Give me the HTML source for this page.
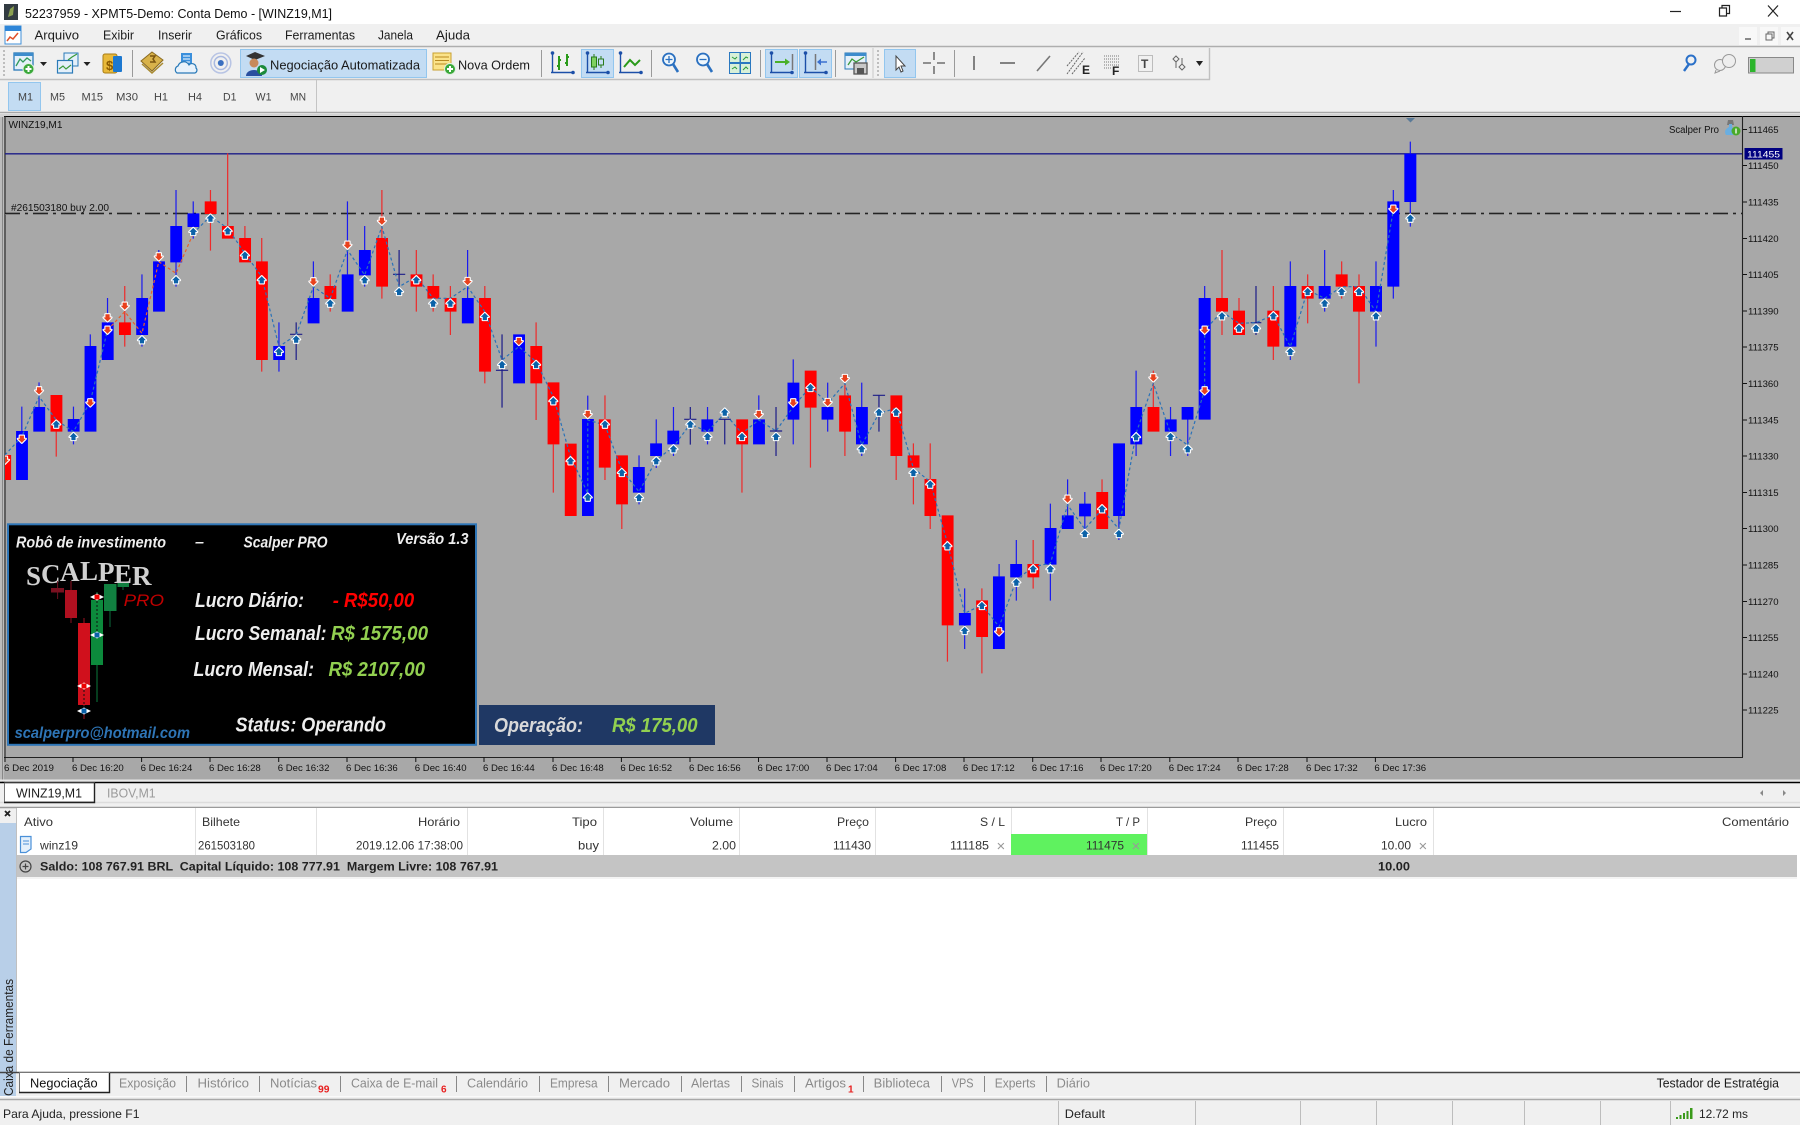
<!DOCTYPE html>
<html><head><meta charset="utf-8"><title>XPMT5</title>
<style>
html,body{margin:0;padding:0;background:#f0f0f0;overflow:hidden}
svg{display:block}
text{font-family:"Liberation Sans",sans-serif;white-space:pre}
.m{font-size:12.5px;fill:#1c1c1c}
.tf{font-size:11px;fill:#444}
.tb{font-size:12.5px;fill:#1a1a1a}
.h{font-size:12px;fill:#333}
.r{font-size:12px;fill:#333}
.b{font-size:12px;fill:#222;font-weight:bold}
.t{font-size:12.5px;fill:#8a8a8a}
.p{font-size:10px;fill:#111}
.d{font-size:9.6px;fill:#111}
.i{font-weight:bold;font-style:italic;fill:#eee}
.s{font-size:12px;fill:#222}
.x{font-size:15px;fill:#999}
.w{vector-effect:non-scaling-stroke;stroke-width:1.2;fill:none}
.sep{stroke:#9a9a9a;stroke-width:1}
.ts{stroke:#888;stroke-width:1}
.cs{stroke:#e2e2e2;stroke-width:1}
.hi{fill:#c3dcf3;stroke:#93c6ee;stroke-width:1}
</style></head><body>
<svg xmlns="http://www.w3.org/2000/svg" width="1800" height="1125" viewBox="0 0 1800 1125">
<defs>
<clipPath id="cc"><rect x="5" y="117" width="1737" height="640"/></clipPath>
<path id="ua" d="M0-3.800L4 .2H2.100V3.400H-2.100V.2H-4Z" fill="#0b62a8" stroke="#fff" stroke-width="2.200" stroke-linejoin="round" paint-order="stroke"/>
<path id="da" d="M0 3.800L4-.2H2.100V-3.400H-2.100V-.2H-4Z" fill="#e8401c" stroke="#fff" stroke-width="2.200" stroke-linejoin="round" paint-order="stroke"/>
<use id="u8" href="#ua" transform="scale(2.613,3)"/>
<use id="d8" href="#da" transform="scale(2.613,3)"/>
<use id="u1" href="#ua" transform="scale(3,3)"/>
<use id="d1" href="#da" transform="scale(3,3)"/>
<g id="pl"><circle r="5.5" fill="#3aa83a" stroke="#dff0df" stroke-width="1"/><path d="M-3 0H3M0-3V3" stroke="#fff" stroke-width="2"/></g>
<g id="ax"><path d="M.5 0V21M-1 20.5H21" stroke="#1c4fa8" stroke-width="1.4" fill="none"/><circle cx=".5" cy="1" r="1.8" fill="#1c4fa8"/><circle cx="21" cy="20.5" r="1.8" fill="#1c4fa8"/></g>
</defs>

<rect width="1800" height="1125" fill="#f0f0f0"/>
<!-- title bar -->
<rect width="1800" height="24" fill="#fff"/>
<rect x="4" y="4" width="14" height="16" fill="#333c42"/><path d="M8 17L10 9 14 6 13 15Z" fill="#8aa050"/>
<text x="25" y="18" font-size="13" fill="#111" textLength="307" lengthAdjust="spacingAndGlyphs">52237959 - XPMT5-Demo: Conta Demo - [WINZ19,M1]</text>
<path d="M1670 11.5H1681" stroke="#222" stroke-width="1.2"/>
<path d="M1719.5 8h7v8h-7zM1722 8V5.500h7.500v8H1726.500" fill="none" stroke="#222" stroke-width="1.2"/>
<path d="M1768 5.500L1778 16.500M1778 5.500L1768 16.500" stroke="#222" stroke-width="1.2"/>

<!-- menu -->
<rect x="5" y="26" width="16" height="18" fill="#fff" stroke="#3f8fd8"/><rect x="5" y="26" width="16" height="5" fill="#2f86d8"/><path d="M7 41L10 37 13 39 18 33" stroke="#e0502a" stroke-width="1.5" fill="none"/>
<text class="m" x="34.500" y="39.500" textLength="44.500" lengthAdjust="spacingAndGlyphs">Arquivo</text>
<text class="m" x="103" y="39.500" textLength="31" lengthAdjust="spacingAndGlyphs">Exibir</text>
<text class="m" x="158" y="39.500" textLength="34" lengthAdjust="spacingAndGlyphs">Inserir</text>
<text class="m" x="216" y="39.500" textLength="46" lengthAdjust="spacingAndGlyphs">Gráficos</text>
<text class="m" x="285" y="39.500" textLength="70" lengthAdjust="spacingAndGlyphs">Ferramentas</text>
<text class="m" x="378" y="39.500" textLength="35" lengthAdjust="spacingAndGlyphs">Janela</text>
<text class="m" x="436" y="39.500" textLength="34" lengthAdjust="spacingAndGlyphs">Ajuda</text>
<rect x="1739" y="27" width="18" height="18" fill="#f8f8f8"/><rect x="1760" y="27" width="18" height="18" fill="#f8f8f8"/><rect x="1781" y="27" width="19" height="18" fill="#f8f8f8"/>
<path d="M1745 39H1751" stroke="#666" stroke-width="1.5"/><path d="M1766 34h6v6h-6zM1768 34v-2h6v6h-2" fill="none" stroke="#666"/><path d="M1787 32L1793 40M1793 32L1787 40" stroke="#444" stroke-width="1.6"/>
<path d="M0 46.500H1800" stroke="#aeaeae" stroke-width="1.4"/>

<!-- toolbar 1 -->
<path d="M1209.500 48V79.500H0" stroke="#c0c0c0" fill="none" stroke-width="1.400"/>
<path d="M4 50V76" stroke="#bdbdbd" stroke-width="2" stroke-dasharray="2 2"/>
<!-- new chart -->
<rect x="14" y="53" width="19" height="17" fill="#e4f0fa" stroke="#2a7ab8" stroke-width="1.300"/><rect x="14" y="53" width="19" height="3" fill="#3d8ccc"/><path d="M16 66L20 59 23 62 27 58 31 61" stroke="#2f9a5a" stroke-width="1.300" fill="none"/><use href="#pl" x="28.500" y="69"/>
<path d="M40 62h7l-3.500 4z" fill="#222"/>
<rect x="64" y="53" width="14" height="13" fill="#e4f0fa" stroke="#2a7ab8"/><rect x="57.500" y="60.500" width="15" height="12.500" fill="#e4f0fa" stroke="#2a7ab8" stroke-width="1.200"/><path d="M59 69L63 66 66 69 71 65M68 60L72 57 77 54" stroke="#3a9a3a" stroke-width="1.200" fill="none"/>
<path d="M83.500 62h7l-3.500 4z" fill="#222"/>
<rect x="103" y="54" width="14" height="19" rx="2" fill="#e8b93a" stroke="#a97d15"/><rect x="113" y="56" width="9" height="16" rx="1" fill="#1c78d0"/><text x="106" y="70" font-size="13" font-weight="bold" fill="#8a5a00">$</text>
<path d="M132.500 50V77" class="sep"/>
<path d="M141 61L152 52 163 60 152 71Z" fill="#d8b24a" stroke="#8a6a20"/><path d="M142 64L152 73 163 63" fill="none" stroke="#a88a30" stroke-width="1.500"/><path d="M150 56h5l-2 3 2 3h-5" stroke="#7a5510" fill="none" stroke-width="1.500"/>
<rect x="181" y="53" width="11" height="13" fill="#3a8fdc"/><path d="M183 56h7M183 59h7M183 62h7" stroke="#fff"/><path d="M177 73a4 4 0 0 1 1-7 6 6 0 0 1 11-1 4 4 0 0 1 7 3 3 3 0 0 1-1 5Z" fill="#e8f2fb" stroke="#2a7ab8" stroke-width="1.200"/>
<circle cx="220.800" cy="63" r="3" fill="#3a6fc0"/><circle cx="220.800" cy="63" r="6.500" fill="none" stroke="#a8b8e0" stroke-width="1.500"/><circle cx="220.800" cy="63" r="10" fill="none" stroke="#b8c4e4" stroke-width="1.500"/>
<rect class="hi" x="240.500" y="49.500" width="186" height="28"/>
<path d="M246 56L255 52 265 56 255 60Z" fill="#333"/><circle cx="254" cy="63" r="4.500" fill="#c88a5a"/><path d="M246 76C246 68 262 68 262 76Z" fill="#2a50a0"/><circle cx="262" cy="70" r="5" fill="#1c8a3a"/><path d="M260 67L265 70 260 73Z" fill="#fff"/>
<text class="tb" x="270" y="69.500" textLength="150" lengthAdjust="spacingAndGlyphs">Negociação Automatizada</text>
<rect x="433" y="53" width="18" height="17" fill="#fbe38a" stroke="#c8a030"/><path d="M435 57H449M435 60.500H449M435 64H449" stroke="#b88a20"/><use href="#pl" x="450" y="69"/>
<text class="tb" x="458" y="69.500" textLength="72" lengthAdjust="spacingAndGlyphs">Nova Ordem</text>
<path d="M541.500 50V77" class="sep"/>
<!-- chart-type -->
<use href="#ax" x="552" y="52"/><path d="M559 56V70M557 66H559M559 60H561M567 54V66M565 63H567M567 57H569" stroke="#2a9a1a" stroke-width="2" fill="none"/>
<rect class="hi" x="581.500" y="49.500" width="32" height="28"/>
<use href="#ax" x="587" y="52"/><path d="M594 54V70M601 56V68" stroke="#2a7a1a"/><rect x="591.500" y="57" width="5" height="10" fill="#7fd060" stroke="#2a7a1a"/><rect x="598.500" y="59" width="5" height="6" fill="#c3dcf3" stroke="#2a7a1a"/>
<use href="#ax" x="620" y="52"/><path d="M624 67L630 60 635 65 640 60" stroke="#2a9a1a" stroke-width="2" fill="none"/>
<path d="M651.500 50V77" class="sep"/>
<circle cx="669" cy="59.500" r="6" fill="#eef6fc" stroke="#2a70c0" stroke-width="1.800"/><path d="M673 64L678 72" stroke="#2a70c0" stroke-width="2.600"/><path d="M665.500 59.500H672.500M669 56V63" stroke="#2a70c0" stroke-width="1.300"/>
<circle cx="703" cy="59.500" r="6" fill="#eef6fc" stroke="#2a70c0" stroke-width="1.800"/><path d="M707 64L712 72" stroke="#2a70c0" stroke-width="2.600"/><path d="M699.500 59.500H706.500" stroke="#2a70c0" stroke-width="1.300"/>
<rect x="729" y="52" width="22" height="22" fill="#2a78c0"/><rect x="730" y="53" width="9.500" height="9" fill="#d8f0d8"/><rect x="741" y="53" width="9" height="9" fill="#d8f0d8"/><rect x="730" y="64" width="9.500" height="9" fill="#d8f0d8"/><rect x="741" y="64" width="9" height="9" fill="#d8f0d8"/><path d="M732 57l3 2 2-2M743 60l3-3 2 1M732 69l3-2 2 2M743 70l3-3 2 2" stroke="#2a9a3a" fill="none"/>
<path d="M760.500 50V77" class="sep"/>
<rect class="hi" x="765.500" y="49.500" width="32" height="28"/><rect class="hi" x="799.500" y="49.500" width="32" height="28"/>
<use href="#ax" x="771" y="52"/><path d="M775 62H786" stroke="#4ab02a" stroke-width="2"/><path d="M785 58.500L790 62 785 65.500Z" fill="#4ab02a"/><path d="M792.500 54V70" stroke="#777" stroke-width="1.500"/>
<use href="#ax" x="805" y="52"/><path d="M815.500 54V70" stroke="#777" stroke-width="1.500"/><path d="M821 62H827" stroke="#3a70d0" stroke-width="1.500"/><path d="M821 58.500L817 62 821 65.500Z" fill="#3a70d0"/>
<path d="M835.500 50V77" class="sep"/>
<rect x="845" y="53" width="21" height="16" fill="#e4f0fa" stroke="#2a7ab8"/><rect x="845" y="53" width="21" height="3" fill="#3d8ccc"/><path d="M848 65L852 59 856 62 864 57" stroke="#3a9a3a" fill="none" stroke-width="1.300"/><rect x="854" y="63" width="13" height="11" fill="#c8c8c8" stroke="#555" stroke-width="1.300"/><rect x="857" y="68" width="7" height="6" fill="#555"/>
<path d="M873 48V78" stroke="#c8c8c8"/><path d="M878 50V76" stroke="#bdbdbd" stroke-width="2" stroke-dasharray="2 2"/>
<rect class="hi" x="884.500" y="49.500" width="31" height="28"/><path d="M896 56V70L899 67 901 72 903 71 901 66H905Z" fill="#fff" stroke="#444"/>
<path d="M934 52V60M934 66V74M923 63H931M937 63H945" stroke="#555" stroke-width="1.300"/>
<path d="M954.500 50V77" class="sep"/>
<path d="M974 56V70" stroke="#666" stroke-width="1.600"/>
<path d="M1000 63H1015" stroke="#666" stroke-width="1.600"/>
<path d="M1037 71L1050 56" stroke="#777" stroke-width="1.600"/>
<path d="M1067 74L1083 52M1067 66L1079 52M1072 74L1085 58" stroke="#666" stroke-width="1" stroke-dasharray="2 1"/><text x="1082" y="74" font-size="12" font-weight="bold" fill="#222">E</text>
<path d="M1104 56H1120M1104 59H1120M1104 62H1120M1104 65H1120M1104 68H1111" stroke="#777" stroke-dasharray="1 1"/><text x="1112" y="75" font-size="12" font-weight="bold" fill="#222">F</text>
<rect x="1138.500" y="55.500" width="14" height="16" fill="none" stroke="#888" stroke-dasharray="1 1"/><text x="1141" y="68" font-size="12" font-weight="bold" fill="#444">T</text>
<path d="M1176 56L1179 59 1176 62 1173 59ZM1182 64L1185 67 1182 70 1179 67ZM1176 62V68M1182 58V64" stroke="#666" fill="none"/>
<path d="M1196 61h7l-3.500 5z" fill="#222"/>
<!-- right icons -->
<circle cx="1691" cy="60" r="4.500" fill="none" stroke="#2a70c8" stroke-width="2"/><path d="M1689 64L1684 71" stroke="#2a70c8" stroke-width="2.400"/>
<circle cx="1720" cy="65" r="5.500" fill="#eee" stroke="#999"/><circle cx="1729" cy="61" r="6.500" fill="#eee" stroke="#999"/><path d="M1716 70L1715 73 1720 71" fill="#eee" stroke="#999"/>
<rect x="1748.500" y="57.500" width="45" height="15.500" fill="#d0d0d0" stroke="#888"/><rect x="1750" y="59" width="5.500" height="13" fill="#2cb52c"/>

<!-- timeframe row -->
<rect class="hi" x="8.500" y="82.500" width="32" height="28"/>
<text class="tf" x="18" y="100.500" textLength="15" lengthAdjust="spacingAndGlyphs">M1</text>
<text class="tf" x="50" y="100.500" textLength="15" lengthAdjust="spacingAndGlyphs">M5</text>
<text class="tf" x="81.500" y="100.500" textLength="21.500" lengthAdjust="spacingAndGlyphs">M15</text>
<text class="tf" x="116" y="100.500" textLength="22" lengthAdjust="spacingAndGlyphs">M30</text>
<text class="tf" x="154" y="100.500" textLength="14" lengthAdjust="spacingAndGlyphs">H1</text>
<text class="tf" x="188" y="100.500" textLength="14" lengthAdjust="spacingAndGlyphs">H4</text>
<text class="tf" x="223" y="100.500" textLength="13.500" lengthAdjust="spacingAndGlyphs">D1</text>
<text class="tf" x="255.500" y="100.500" textLength="16" lengthAdjust="spacingAndGlyphs">W1</text>
<text class="tf" x="290" y="100.500" textLength="16" lengthAdjust="spacingAndGlyphs">MN</text>
<path d="M316.500 80V112" stroke="#c4c4c4"/>
<path d="M0 112.500H1800" stroke="#a6a6a6" stroke-width="1.600"/>
<rect x="0" y="114" width="1800" height="3" fill="#d2d2d2"/>
<rect x="0" y="117" width="5" height="665" fill="#bcbcbc"/><path d="M2.500 117V782" stroke="#888"/>

<!-- chart -->
<rect x="4" y="116" width="1796" height="664" fill="#a8a8a8"/>
<path d="M4 116.500H1800" stroke="#000" stroke-width="1.100"/>
<path d="M5 116V757" stroke="#222" stroke-width="1.100"/>
<path d="M1742.500 116V757" stroke="#222" stroke-width="1.100"/>
<path d="M4 757.500H1743" stroke="#222" stroke-width="1.100"/>
<path d="M0 780.500H1800" stroke="#e6e6e6" stroke-width="2"/>
<path d="M0 782.500H1800" stroke="#000" stroke-width="1.500"/>

<text class="p" x="8.500" y="128" textLength="54" lengthAdjust="spacingAndGlyphs">WINZ19,M1</text>
<text class="p" x="11" y="211" textLength="98" lengthAdjust="spacingAndGlyphs">#261503180 buy 2.00</text>
<text class="p" x="1669" y="133" textLength="50" lengthAdjust="spacingAndGlyphs">Scalper Pro</text>
<path d="M1728 120h5l1 5h-7z" fill="#777"/><path d="M1729 124h3v3l4 3-3 5h-7q-3-5 3-8z" fill="#6aaee0"/><circle cx="1736" cy="131" r="4.500" fill="#4aaa2a"/><path d="M1736 128.500v5" stroke="#fff" stroke-width="1.300"/>
<path d="M1406 118H1415L1410.500 122.500Z" fill="#5a7a98"/>

<g clip-path="url(#cc)">
<path d="M5 153.800H1742" stroke="#1c1c88" stroke-width="1.300"/>
<path d="M5 214.300H1742" stroke="#777" stroke-width="1" stroke-dasharray="15 5 3 5"/>
<path d="M5 213.300H1742" stroke="#000" stroke-width="1" stroke-dasharray="15 5 3 5"/>

<g transform="translate(0,130) scale(.38265,.33333)">
<path class="w" stroke="#ee2a2a" d="M147 905V980M326 468V650M550 180V362M595 70V288M640 288V324M684 324V725M863 433V545M998 180V506M1088 360V545M1132 433V545M1177 468V615M1267 468V760M1401 577V870M1446 943V1088"/>
<path class="w" stroke="#1a1af0" d="M57 830V903M102 757V831M192 830V943M236 613V648M281 504V577M371 433V650M415 360V394M460 180V470M505 214V326M729 577V725M819 394V504M908 214V433M953 288V470M1222 360V504M1536 797V867"/>
<path class="w" stroke="#1c1c88" d="M774 577V690M758 613H790M1043 360V470M1027 433H1059M1312 613V833M1296 721H1328"/>
<path fill="#f00" d="M-3 975h32V1050h-32zM132 795h31V905h-31zM311 577h31V615h-31zM535 214h31V252h-31zM580 288h31V326h-31zM625 324h31V397h-31zM669 394h31V690h-31zM848 468h31V507h-31zM983 324h31V470h-31zM1073 433h31V470h-31zM1117 468h31V506h-31zM1162 504h31V545h-31zM1252 504h31V725h-31zM1386 648h31V760h-31zM1431 757h31V943h-31zM1476 941h31V1158h-31z"/>
<path fill="#00f" d="M42 903h31V1050h-31zM87 831h31V905h-31zM177 867h31V905h-31zM221 648h31V905h-31zM266 577h31V690h-31zM356 504h31V615h-31zM400 394h31V545h-31zM445 288h31V397h-31zM490 250h31V291h-31zM714 648h31V690h-31zM804 504h31V580h-31zM893 433h31V545h-31zM938 360h31V436h-31zM1207 504h31V580h-31zM1341 613h31V760h-31zM1521 867h31V1158h-31z"/>
<path class="w" stroke="#2a72b8" stroke-dasharray="3 2.500" d="M13 975L57 920 102 800 147 870 192 905 236 815 281 600M505 310L550 258 595 295 640 370 684 440 729 650 774 615 819 470 863 505 908 360 953 435 998 290 1043 470 1088 440 1132 505 1177 505 1222 470 1267 545 1312 690 1356 650 1401 695 1446 800 1491 980 1536 1090 1536 870 1581 885"/>
<path class="w" stroke="#e8602a" stroke-dasharray="3 2.500" d="M281 600L326 545 371 610 415 395 460 430 505 310"/>
<use href="#d8" x="13" y="990"/><use href="#d8" x="57" y="927"/><use href="#d8" x="102" y="782"/><use href="#u8" x="147" y="883"/><use href="#u8" x="192" y="920"/><use href="#d8" x="236" y="818"/><use href="#d8" x="281" y="563"/><use href="#d8" x="281" y="600"/><use href="#d8" x="326" y="528"/><use href="#u8" x="371" y="630"/><use href="#d8" x="415" y="380"/><use href="#u8" x="460" y="450"/><use href="#u8" x="505" y="305"/><use href="#u8" x="550" y="265"/><use href="#u8" x="595" y="303"/><use href="#u8" x="640" y="376"/><use href="#u8" x="684" y="450"/><use href="#u8" x="729" y="665"/><use href="#u8" x="774" y="628"/><use href="#d8" x="819" y="455"/><use href="#u8" x="863" y="520"/><use href="#d8" x="908" y="345"/><use href="#u8" x="953" y="450"/><use href="#d8" x="998" y="273"/><use href="#u8" x="1043" y="485"/><use href="#u8" x="1088" y="450"/><use href="#u8" x="1132" y="520"/><use href="#u8" x="1177" y="520"/><use href="#d8" x="1222" y="454"/><use href="#u8" x="1267" y="560"/><use href="#u8" x="1312" y="704"/><use href="#d8" x="1356" y="634"/><use href="#u8" x="1401" y="704"/><use href="#u8" x="1446" y="813"/><use href="#u8" x="1491" y="993"/><use href="#d8" x="1536" y="853"/><use href="#u8" x="1536" y="1102"/>
</g>

<g transform="translate(600,350) scale(.38265,.33333)">
<path class="w" stroke="#ee2a2a" d="M13 136V390M57 463V537M371 283V428M550 173V353M640 98V318M774 318V390M819 280V463M863 280V537M908 826V935M998 715V970M1132 570V716M1312 388V426M1446 62V171"/>
<path class="w" stroke="#1a1af0" d="M102 316V463M147 208V354M192 171V318M281 171V283M415 136V208M505 28V283M595 98V245M684 98V318M953 715V897M1043 642V679M1088 570V752M1177 461V752M1222 388V496M1267 426V537M1356 498V570M1401 62V318M1491 171V318M1536 171V318"/>
<path class="w" stroke="#1c1c88" d="M236 171V284M220 208H252M326 208V283M310 208H342M460 171V318M444 243H476M729 136V245M713 136H745"/>
<path fill="#f00" d="M-3 208h31V353h-31zM42 316h31V463h-31zM356 208h31V283h-31zM535 62h31V173h-31zM625 136h31V245h-31zM759 136h31V318h-31zM804 316h31V353h-31zM848 387h31V498h-31zM893 496h31V826h-31zM983 751h31V861h-31zM1117 642h31V682h-31zM1297 426h31V537h-31zM1431 171h31V245h-31z"/>
<path fill="#00f" d="M86 351h31V428h-31zM131 280h31V318h-31zM176 242h31V283h-31zM265 208h31V245h-31zM400 208h31V283h-31zM490 98h31V209h-31zM579 171h31V209h-31zM669 171h31V283h-31zM938 789h31V826h-31zM1027 679h31V897h-31zM1072 642h31V682h-31zM1162 534h31V644h-31zM1207 496h31V537h-31zM1252 461h31V499h-31zM1341 280h31V498h-31zM1386 171h31V283h-31zM1476 208h31V245h-31zM1520 171h31V209h-31z"/>
<path class="w" stroke="#2a72b8" stroke-dasharray="3 2.500" d="M13 225L57 360 102 425 147 330 192 290 236 222 281 245 326 190 371 250 415 210 460 243 505 170 550 110 595 160 640 100 684 285 729 190 774 175 819 355 863 395 908 580 953 790 998 765 1043 830 1088 690 1132 650 1177 640 1222 465 1267 537 1312 478 1356 537 1401 250 1446 100 1491 250 1536 285"/>
<use href="#u8" x="13" y="223"/><use href="#u8" x="57" y="368"/><use href="#u8" x="102" y="443"/><use href="#u8" x="147" y="333"/><use href="#u8" x="192" y="297"/><use href="#u8" x="236" y="223"/><use href="#u8" x="281" y="260"/><use href="#u8" x="326" y="187"/><use href="#u8" x="371" y="260"/><use href="#d8" x="415" y="193"/><use href="#u8" x="460" y="260"/><use href="#d8" x="505" y="158"/><use href="#u8" x="550" y="113"/><use href="#d8" x="595" y="157"/><use href="#d8" x="640" y="85"/><use href="#u8" x="684" y="297"/><use href="#u8" x="729" y="187"/><use href="#u8" x="774" y="187"/><use href="#u8" x="819" y="368"/><use href="#u8" x="863" y="403"/><use href="#u8" x="908" y="588"/><use href="#u8" x="953" y="842"/><use href="#u8" x="998" y="767"/><use href="#d8" x="1043" y="845"/><use href="#u8" x="1088" y="697"/><use href="#u8" x="1132" y="657"/><use href="#u8" x="1177" y="657"/><use href="#d8" x="1222" y="447"/><use href="#u8" x="1267" y="551"/><use href="#u8" x="1312" y="477"/><use href="#u8" x="1356" y="551"/><use href="#u8" x="1401" y="261"/><use href="#d8" x="1446" y="83"/><use href="#u8" x="1491" y="260"/><use href="#u8" x="1536" y="297"/>
</g>

<g transform="translate(1100,130) scale(.33333)">
<path class="w" stroke="#ee2a2a" d="M366 360V615M417 504V542M520 468V690M623 433V580M725 394V506M777 433V760"/>
<path class="w" stroke="#1a1af0" d="M314 468V504M571 394V690M674 360V545M828 394V650M880 180V506M931 35V290"/>
<path class="w" stroke="#1c1c88" d="M468 468V615M452 578H484"/>
<path fill="#f00" d="M348 504h36V545h-36zM399 542h36V615h-36zM502 542h36V650h-36zM605 468h36V506h-36zM707 433h36V470h-36zM759 468h36V545h-36z"/>
<path fill="#00f" d="M296 504h36V869h-36zM553 468h36V650h-36zM656 468h36V506h-36zM810 468h36V545h-36zM862 214h36V470h-36zM913 71h36V216h-36z"/>
<path class="w" stroke="#2a72b8" stroke-dasharray="3 2.500" d="M263 945L314 780 314 600 366 545 417 580 468 578 520 555 571 650 623 480 674 505 725 470 777 470 828 545 880 240"/>
<use href="#d1" x="314" y="600"/><use href="#d1" x="314" y="782"/><use href="#u1" x="366" y="558"/><use href="#u1" x="417" y="595"/><use href="#u1" x="468" y="595"/><use href="#u1" x="520" y="558"/><use href="#u1" x="571" y="665"/><use href="#u1" x="623" y="485"/><use href="#u1" x="674" y="520"/><use href="#u1" x="725" y="485"/><use href="#u1" x="777" y="485"/><use href="#u1" x="828" y="558"/><use href="#d1" x="880" y="237"/><use href="#u1" x="931" y="265"/>
</g>
</g>

<!-- price axis -->
<path stroke="#111" d="M1743 129.500h4M1743 165.500h4M1743 202h4M1743 238.500h4M1743 274.500h4M1743 311h4M1743 347h4M1743 383.500h4M1743 420h4M1743 456h4M1743 492.500h4M1743 528.500h4M1743 565h4M1743 601.500h4M1743 637.500h4M1743 674h4M1743 710h4"/>
<text class="d" x="1748" y="133">111465</text>
<text class="d" x="1748" y="169">111450</text>
<text class="d" x="1748" y="205.500">111435</text>
<text class="d" x="1748" y="242">111420</text>
<text class="d" x="1748" y="278">111405</text>
<text class="d" x="1748" y="314.500">111390</text>
<text class="d" x="1748" y="350.500">111375</text>
<text class="d" x="1748" y="387">111360</text>
<text class="d" x="1748" y="423.500">111345</text>
<text class="d" x="1748" y="459.500">111330</text>
<text class="d" x="1748" y="496">111315</text>
<text class="d" x="1748" y="532">111300</text>
<text class="d" x="1748" y="568.500">111285</text>
<text class="d" x="1748" y="605">111270</text>
<text class="d" x="1748" y="641">111255</text>
<text class="d" x="1748" y="677.500">111240</text>
<text class="d" x="1748" y="713.500">111225</text>
<rect x="1744.500" y="148" width="38" height="11.500" fill="#000080"/>
<text class="d" x="1747" y="157.500" style="fill:#fff" textLength="33" lengthAdjust="spacingAndGlyphs">111455</text>

<!-- time axis -->
<path stroke="#111" d="M5 757v5M73 757v5M141.600 757v5M210 757v5M278.700 757v5M347 757v5M415.800 757v5M484 757v5M553 757v5M621.400 757v5M690 757v5M758.500 757v5M827 757v5M895.600 757v5M964 757v5M1032.700 757v5M1101 757v5M1169.800 757v5M1238 757v5M1307 757v5M1375.400 757v5"/>
<text class="d" x="4" y="771" textLength="50" lengthAdjust="spacingAndGlyphs">6 Dec 2019</text>
<text class="d" x="72" y="771">6 Dec 16:20</text>
<text class="d" x="140.600" y="771">6 Dec 16:24</text>
<text class="d" x="209" y="771">6 Dec 16:28</text>
<text class="d" x="277.700" y="771">6 Dec 16:32</text>
<text class="d" x="346" y="771">6 Dec 16:36</text>
<text class="d" x="414.800" y="771">6 Dec 16:40</text>
<text class="d" x="483" y="771">6 Dec 16:44</text>
<text class="d" x="552" y="771">6 Dec 16:48</text>
<text class="d" x="620.400" y="771">6 Dec 16:52</text>
<text class="d" x="689" y="771">6 Dec 16:56</text>
<text class="d" x="757.500" y="771">6 Dec 17:00</text>
<text class="d" x="826" y="771">6 Dec 17:04</text>
<text class="d" x="894.600" y="771">6 Dec 17:08</text>
<text class="d" x="963" y="771">6 Dec 17:12</text>
<text class="d" x="1031.700" y="771">6 Dec 17:16</text>
<text class="d" x="1100" y="771">6 Dec 17:20</text>
<text class="d" x="1168.800" y="771">6 Dec 17:24</text>
<text class="d" x="1237" y="771">6 Dec 17:28</text>
<text class="d" x="1306" y="771">6 Dec 17:32</text>
<text class="d" x="1374.400" y="771">6 Dec 17:36</text>

<!-- robot panel -->
<rect x="8" y="524.300" width="468" height="220.500" fill="#000" stroke="#2e75b6" stroke-width="2"/>
<text class="i" x="16" y="547.500" font-size="15.500" textLength="150" lengthAdjust="spacingAndGlyphs">Robô de investimento</text>
<text class="i" x="195" y="547" font-size="15.500" textLength="9" lengthAdjust="spacingAndGlyphs">–</text>
<text class="i" x="243.500" y="547.500" font-size="15.500" textLength="84" lengthAdjust="spacingAndGlyphs">Scalper PRO</text>
<text class="i" x="396" y="544" font-size="15.500" textLength="72.500" lengthAdjust="spacingAndGlyphs">Versão 1.3</text>
<text class="i" x="195" y="607" font-size="20" textLength="109" lengthAdjust="spacingAndGlyphs">Lucro Diário:</text>
<text class="i" x="332.700" y="607" font-size="20" style="fill:#f00" textLength="81.500" lengthAdjust="spacingAndGlyphs">- R$50,00</text>
<text class="i" x="195" y="640" font-size="20" textLength="131.500" lengthAdjust="spacingAndGlyphs">Lucro Semanal:</text>
<text class="i" x="331" y="640" font-size="20" style="fill:#92d050" textLength="97" lengthAdjust="spacingAndGlyphs">R$ 1575,00</text>
<text class="i" x="193.500" y="676" font-size="20" textLength="120.500" lengthAdjust="spacingAndGlyphs">Lucro Mensal:</text>
<text class="i" x="328.500" y="676" font-size="20" style="fill:#92d050" textLength="96.500" lengthAdjust="spacingAndGlyphs">R$ 2107,00</text>
<text class="i" x="235.500" y="731.500" font-size="20" textLength="150.500" lengthAdjust="spacingAndGlyphs">Status: Operando</text>
<text class="i" x="14.600" y="738" font-size="16" style="fill:#2e75b6" textLength="175.400" lengthAdjust="spacingAndGlyphs">scalperpro@hotmail.com</text>
<!-- logo -->
<text x="26 41 60 80 98 114 132" y="585 583 581 580 581 583 585" font-size="27" font-weight="bold" style="font-family:'Liberation Serif',serif" fill="#d0d0d0">SCALPER</text>
<text x="123.600" y="606" font-size="17" font-style="italic" style="font-family:'Liberation Sans',sans-serif" fill="#c00000" textLength="40.400" lengthAdjust="spacingAndGlyphs">PRO</text>
<path d="M57.600 581V599" stroke="#6a1020"/><rect x="51" y="588" width="13" height="4.500" fill="#7a1020"/>
<path d="M71 581V623" stroke="#8a1020"/><rect x="65" y="590" width="12" height="28" fill="#b01020"/>
<path d="M84 618V719" stroke="#a01020"/><rect x="78" y="623" width="12" height="82" fill="#d0101c"/>
<path d="M97 592V702" stroke="#0c7a3c"/><rect x="91" y="600" width="12" height="65" fill="#0c8a3c"/>
<path d="M110 584V627" stroke="#0c6a3c"/><rect x="104" y="584" width="12.500" height="27" fill="#118040"/>
<path d="M123 583V590" stroke="#0c6a3c"/><rect x="117.500" y="583" width="11.500" height="4" fill="#118040"/>
<path d="M97 597V635M84 686V711" stroke="#111" stroke-dasharray="2 2"/>
<g transform="translate(97,597)"><path d="M-7 0L0-3.500 7 0 0 3.500Z" fill="#fff"/><rect x="-2.500" y="-2.500" width="5" height="5" fill="#e00"/></g>
<g transform="translate(97,635)"><path d="M-7 0L0-3.500 7 0 0 3.500Z" fill="#fff"/><rect x="-2.500" y="-2.500" width="5" height="5" fill="#0b62a8"/></g>
<g transform="translate(84,686)"><path d="M-7 0L0-3.500 7 0 0 3.500Z" fill="#fff"/><rect x="-2.500" y="-2.500" width="5" height="5" fill="#e00"/></g>
<g transform="translate(84,711)"><path d="M-7 0L0-3.500 7 0 0 3.500Z" fill="#fff"/><rect x="-2.500" y="-2.500" width="5" height="5" fill="#0b62a8"/></g>
<rect x="479" y="705" width="236" height="40" fill="#1f3864"/>
<text class="i" x="494" y="732" font-size="20" style="fill:#d9d9d9" textLength="89" lengthAdjust="spacingAndGlyphs">Operação:</text>
<text class="i" x="612" y="732" font-size="20" style="fill:#92d050" textLength="85.500" lengthAdjust="spacingAndGlyphs">R$ 175,00</text>

<!-- chart tabs -->
<rect x="0" y="784" width="1800" height="18" fill="#f0f0f0"/>
<path d="M0 802.500H1800" stroke="#dcdcdc" stroke-width="1.500"/>
<rect x="4.500" y="783" width="90" height="19" fill="#fff" stroke="#777"/><path d="M94.500 783V802.500H4" stroke="#222" fill="none" stroke-width="1.400"/>
<text class="m" x="16" y="797.500" textLength="66" lengthAdjust="spacingAndGlyphs">WINZ19,M1</text>
<text class="m" x="107" y="797.500" style="fill:#9a9a9a" textLength="48.600" lengthAdjust="spacingAndGlyphs">IBOV,M1</text>
<path d="M1763 790v6l-3-3zM1783 790v6l3-3z" fill="#888"/>

<!-- toolbox -->
<path d="M0 807.500H1800" stroke="#9a9a9a" stroke-width="1.500"/>
<rect x="17" y="808" width="1783" height="264" fill="#fff"/>
<path d="M16.500 808V1072" stroke="#c0c0c0"/>
<rect x="0" y="823" width="16" height="274" fill="#b8cfe8"/>
<text x="13" y="1096" font-size="12.500" fill="#222" transform="rotate(-90 13 1096)" textLength="117" lengthAdjust="spacingAndGlyphs">Caixa de Ferramentas</text>
<path d="M5 811L10 816M10 811L5 816" stroke="#222" stroke-width="1.800"/>

<!-- table -->
<path class="cs" d="M195.500 808V855M316.500 808V855M467.500 808V855M603.500 808V855M739.500 808V855M875.500 808V855M1011.500 808V855M1147.500 808V855M1283.500 808V855M1433.500 808V855"/>
<text class="h" x="24" y="826" textLength="29" lengthAdjust="spacingAndGlyphs">Ativo</text>
<text class="h" x="202" y="826" textLength="38" lengthAdjust="spacingAndGlyphs">Bilhete</text>
<text class="h" x="418" y="826" textLength="42" lengthAdjust="spacingAndGlyphs">Horário</text>
<text class="h" x="572" y="826" textLength="25" lengthAdjust="spacingAndGlyphs">Tipo</text>
<text class="h" x="690" y="826" textLength="43" lengthAdjust="spacingAndGlyphs">Volume</text>
<text class="h" x="837" y="826" textLength="32" lengthAdjust="spacingAndGlyphs">Preço</text>
<text class="h" x="980" y="826" textLength="25" lengthAdjust="spacingAndGlyphs">S / L</text>
<text class="h" x="1116" y="826" textLength="24" lengthAdjust="spacingAndGlyphs">T / P</text>
<text class="h" x="1245" y="826" textLength="32" lengthAdjust="spacingAndGlyphs">Preço</text>
<text class="h" x="1395" y="826" textLength="32" lengthAdjust="spacingAndGlyphs">Lucro</text>
<text class="h" x="1722" y="826" textLength="67" lengthAdjust="spacingAndGlyphs">Comentário</text>
<path d="M20.500 836.500H31V849L26 852.500H20.500Z" fill="#e4f0fb" stroke="#4a90d8" stroke-width="1.200"/><path d="M23 841H29M23 844H29" stroke="#4a90d8"/>
<text class="r" x="40" y="849.500" textLength="38" lengthAdjust="spacingAndGlyphs">winz19</text>
<text class="r" x="198" y="849.500" textLength="57" lengthAdjust="spacingAndGlyphs">261503180</text>
<text class="r" x="356" y="849.500" textLength="107" lengthAdjust="spacingAndGlyphs">2019.12.06 17:38:00</text>
<text class="r" x="578" y="849.500" textLength="21" lengthAdjust="spacingAndGlyphs">buy</text>
<text class="r" x="712" y="849.500" textLength="24" lengthAdjust="spacingAndGlyphs">2.00</text>
<text class="r" x="833" y="849.500" textLength="38" lengthAdjust="spacingAndGlyphs">111430</text>
<text class="r" x="950" y="849.500" textLength="39" lengthAdjust="spacingAndGlyphs">111185</text>
<text class="x" x="996.500" y="851">×</text>
<rect x="1011" y="834" width="136" height="21" fill="#5ff25f"/>
<text class="r" x="1086" y="849.500" textLength="38" lengthAdjust="spacingAndGlyphs">111475</text>
<text class="x" x="1131.500" y="851">×</text>
<text class="r" x="1241" y="849.500" textLength="38" lengthAdjust="spacingAndGlyphs">111455</text>
<text class="r" x="1381" y="849.500" textLength="30" lengthAdjust="spacingAndGlyphs">10.00</text>
<text class="x" x="1418.500" y="851">×</text>
<rect x="17" y="855" width="1780" height="22" fill="#c4c4c4"/>
<circle cx="25.500" cy="866.500" r="5.500" fill="none" stroke="#444" stroke-width="1.200"/><path d="M22.500 866.500H28.500M25.500 863.500V869.500" stroke="#444" stroke-width="1.200"/>
<text class="b" x="40" y="870.500" textLength="458" lengthAdjust="spacingAndGlyphs">Saldo: 108 767.91 BRL  Capital Líquido: 108 777.91  Margem Livre: 108 767.91</text>
<text class="b" x="1378" y="870.500" textLength="32" lengthAdjust="spacingAndGlyphs">10.00</text>
<path d="M17 878H1797" stroke="#e8e8e8"/>

<!-- bottom tabs -->
<path d="M0 1072.500H1800" stroke="#444" stroke-width="1.500"/>
<rect x="17" y="1073.500" width="1783" height="23" fill="#f0f0f0"/>
<rect x="19.500" y="1072.500" width="90" height="20" fill="#fff" stroke="#777"/><path d="M109.500 1073V1092.500H19" stroke="#222" fill="none" stroke-width="1.400"/>
<text class="tb" x="30" y="1087.500" style="fill:#111" textLength="67.600" lengthAdjust="spacingAndGlyphs">Negociação</text>
<text class="t" x="119" y="1087.500" textLength="57" lengthAdjust="spacingAndGlyphs">Exposição</text>
<text class="t" x="197.500" y="1087.500" textLength="51.500" lengthAdjust="spacingAndGlyphs">Histórico</text>
<text class="t" x="270" y="1087.500" textLength="47" lengthAdjust="spacingAndGlyphs">Notícias</text>
<text x="318" y="1092.500" font-size="10" font-weight="bold" fill="#e82020" textLength="11.500" lengthAdjust="spacingAndGlyphs">99</text>
<text class="t" x="351" y="1087.500" textLength="87" lengthAdjust="spacingAndGlyphs">Caixa de E-mail</text>
<text x="441" y="1092.500" font-size="10" font-weight="bold" fill="#e82020">6</text>
<text class="t" x="467" y="1087.500" textLength="61" lengthAdjust="spacingAndGlyphs">Calendário</text>
<text class="t" x="550" y="1087.500" textLength="47.600" lengthAdjust="spacingAndGlyphs">Empresa</text>
<text class="t" x="619" y="1087.500" textLength="51" lengthAdjust="spacingAndGlyphs">Mercado</text>
<text class="t" x="691" y="1087.500" textLength="39" lengthAdjust="spacingAndGlyphs">Alertas</text>
<text class="t" x="751.500" y="1087.500" textLength="32" lengthAdjust="spacingAndGlyphs">Sinais</text>
<text class="t" x="805" y="1087.500" textLength="41" lengthAdjust="spacingAndGlyphs">Artigos</text>
<text x="848" y="1092.500" font-size="10" font-weight="bold" fill="#e82020">1</text>
<text class="t" x="873.700" y="1087.500" textLength="56.300" lengthAdjust="spacingAndGlyphs">Biblioteca</text>
<text class="t" x="951.700" y="1087.500" textLength="21.800" lengthAdjust="spacingAndGlyphs">VPS</text>
<text class="t" x="994.700" y="1087.500" textLength="40.800" lengthAdjust="spacingAndGlyphs">Experts</text>
<text class="t" x="1056.700" y="1087.500" textLength="33.300" lengthAdjust="spacingAndGlyphs">Diário</text>
<path class="ts" d="M186.500 1076V1092M259.500 1076V1092M340.500 1076V1092M456.500 1076V1092M539.500 1076V1092M608.500 1076V1092M681.500 1076V1092M741.500 1076V1092M794.500 1076V1092M863.500 1076V1092M941.500 1076V1092M984.500 1076V1092M1046.500 1076V1092"/>
<text class="tb" x="1656.600" y="1087.500" textLength="122.400" lengthAdjust="spacingAndGlyphs">Testador de Estratégia</text>
<path d="M0 1096.500H1800" stroke="#fafafa"/>
<path d="M0 1099.500H1800" stroke="#a8a8a8" stroke-width="1.500"/>

<!-- status -->
<text class="s" x="3" y="1118" textLength="136.500" lengthAdjust="spacingAndGlyphs">Para Ajuda, pressione F1</text>
<text class="s" x="1064.800" y="1118" textLength="40.200" lengthAdjust="spacingAndGlyphs">Default</text>
<path stroke="#bdbdbd" d="M1058.500 1101V1125M1195.500 1101V1125M1300.500 1101V1125M1376.500 1101V1125M1452.500 1101V1125M1524.500 1101V1125M1600.500 1101V1125M1670.500 1101V1125"/>
<path d="M1676 1119h2v-2h-2zM1679.500 1119h2v-4h-2zM1683 1119h2v-6h-2zM1686.500 1119h2v-8h-2zM1690 1119h2.500v-11h-2.500z" fill="#3a9a1a"/>
<text class="s" x="1699" y="1118" textLength="49" lengthAdjust="spacingAndGlyphs">12.72 ms</text>
</svg>
</body></html>
